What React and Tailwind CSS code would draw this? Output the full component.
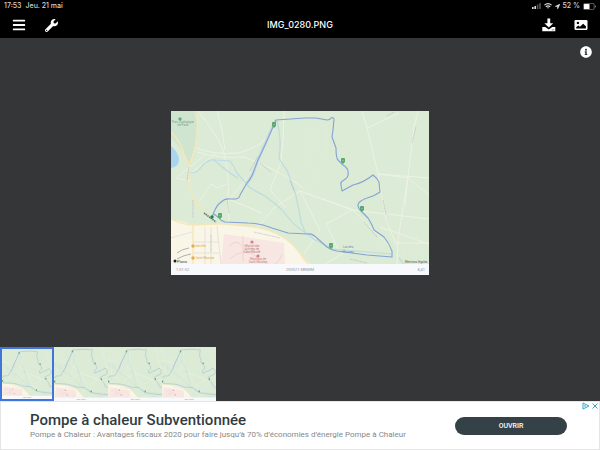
import React from "react";
import { FaBars, FaInfoCircle, FaWrench, FaLocationArrow } from "react-icons/fa";

const ROUTE =
  "M212 217 L214 212 Q217 205 220 203 Q225 198 230 199 L236 199 Q240 198 240 195 L247 183 Q252 177 253 173 L258 160 L265 145 L273 127 L276 120 L305 118 L316 118 L327 120 Q330 120 331 118 Q333 117 334 119 L333 130 L332 137 L336 148 Q336 158 338 160 L343 165 Q349 169 348 173 Q349 177 344 180 Q340 182 341 185 L342 191 L353 185 Q363 183 373 175 Q377 178 379 182 L380 192 Q374 196 370 197 Q357 201 358 206 Q359 210 362 212 L368 218 Q372 224 374 230 L384 237 Q389 243 392 251 L392 257 L367 255 L337 251 Q331 250 327 247 L318 239 Q312 233 308 234 L288 233 L272 228 Q260 223 248 223 L225 222 Q221 221 219 218 L214 214";

const PINS = [
  [274, 126],
  [343, 162],
  [362, 210],
  [331, 247],
  [220, 217],
];

const MapLabels = () => {
  return (
    <>
      <g fontSize="3" textAnchor="middle">
        <text x="183" y="123" fill="#79a388">Parc Zoologique</text>
        <text x="183" y="126" fill="#79a388">de Paris</text>
        <text x="252" y="247" fill="#c57e85">Hôpital des</text>
        <text x="252" y="250" fill="#c57e85">Armées de</text>
        <text x="252" y="253" fill="#c57e85">Saint-Mandé</text>
        <text x="258" y="260" fill="#c57e85">Hôpitaux de</text>
        <text x="258" y="263" fill="#c57e85">Saint-Maurice</text>
        <text x="200" y="247" fill="#d9a54f">Joinville</text>
        <text x="205" y="259" fill="#d9a54f">Saint-Maurice</text>
        <text x="348" y="248" fill="#6794a9">Lac des</text>
        <text x="348" y="253" fill="#6794a9">Minimes</text>
        <text x="416" y="263" fill="#59645b">Mentions légales</text>
      </g>
      <text x="177" y="263" fontSize="4" fill="#444">Plans</text>
      <g fontSize="4" fill="#96989d">
        <text x="176" y="271">1:01:52</text>
        <text x="425" y="271" textAnchor="end">8,41</text>
      </g>
    </>
  );
};

const TrackMap = ({ className, labels }) => {
  return (
    <svg
      viewBox="171 111 258 164"
      preserveAspectRatio="xMidYMid slice"
      className={className}
      fontFamily="Roboto, sans-serif"
      role="img"
      aria-label="Plans"
    >
      <path d="M171 111h258v164h-258z" fill="#dcebd5" />
      <path d="M171 111h26q0 22-3 38l-4 16q-6-15-19-27z" fill="#cfe5cf" />
      <path d="M171 146q7 6 8 13q0 8-8 9z" fill="#a9d3ee" />
      <path d="M171 220Q182 220 192 225L218 224L248 227Q270 229 281 236Q292 243 300 254L310 264H171z" fill="#f9f5e7" />
      <path d="M224 234L284 243L285 264H221z" fill="#f7e6e2" />
      <g fill="none" stroke="#f6e7b6" strokeWidth="1.4">
        <path d="M195 111Q199 123 197 141Q194 153 190 163Q187 175 190 190L194 200Q202 211 212 219" />
        <path d="M171 132Q181 142 184 154L188 165" />
        <path d="M171 219Q182 224 192 225L218 224Q255 222 281 236Q295 244 303 258L308 264" />
        <path d="M193 225V264" />
      </g>
      <g fill="none" stroke="#edf2e7" strokeWidth="1">
        <path d="M198 111Q218 136 223 150Q230 174 228 199L229 222" />
        <path d="M217 111Q223 130 225 150M197 148Q213 155 238 153Q262 148 274 129" />
        <path d="M197 152Q220 159 244 157Q278 169 305 189M205 155L176 178L190 181" />
        <path d="M190 174L216 153M199 202L211 184L218 188L226 184M230 199L247 178" />
        <path d="M284 111Q284 137 281 162L270 190L286 208" />
        <path d="M257 228L274 208L300 191L354 210M228 199L262 213" />
        <path d="M362 111L367 128L378 174L408 178L429 195M367 128L399 113M418 111L414 127L408 176L398 240L397 264" />
        <path d="M378 174L429 178M378 174L386 220L396 244M300 191L352 210L429 219" />
        <path d="M352 209Q375 231 392 249M300 191L320 230L304 254M352 210L326 224L338 249" />
        <path d="M380 227L429 244M396 243H429M325 264L352 248M408 178L405 205" />
      </g>
      <g fill="none" stroke="#e2ebd8" strokeWidth="1">
        <path d="M173 179L189 174M171 212L192 225M312 128V151M326 125V158M305 150L320 184M404 225V264M416 230V264" />
      </g>
      <g fill="none" stroke="#e6e2db" strokeWidth="1">
        <path d="M171 238L192 232M205 227V264M211 227V264M217 226L221 264M194 242H219M194 253H219" />
        <path d="M229 246Q237 238 243 247T257 248M230 259Q244 245 260 259T282 254M243 236V262" stroke="#efd4d1" />
      </g>
      <g fill="none" stroke="#bddbe3" strokeWidth="1.2">
        <path d="M190 173Q198 173 202 166Q208 159 216 160L230 161Q234 166 237 173Q244 181 249 187Q259 193 265 196Q275 203 283 211Q291 222 300 229Q309 235 315 240L333 249L391 254" />
        <path d="M214 160Q230 174 238 178" />
        <path d="M277 121Q282 140 279 158Q283 166 287 170L295 192Q299 209 301 222L306 234" />
        <path d="M399 258L404 264" />
      </g>
      <path d="M276 120L272 128L258 160L253 174L246 185" fill="none" stroke="#cddce3" strokeWidth="3" />
      <path d={ROUTE} fill="none" stroke="#84a2d4" strokeWidth="1.1" strokeLinejoin="round" />
      <g fill="none" stroke="#a9a8b8" strokeWidth="0.8" strokeDasharray="2 0.6">
        <path d="M250 171L258 156M260 163L271 172M290 181L294 191" opacity="0.6" />
        <path d="M416 127L412 143M364 222L377 237M383 200L386 215M387 116L394 112" opacity="0.6" />
        <path d="M254 232L280 238M350 259L367 263M227 198L229 213M211 235V252M193 200V218M189 167L187 181" opacity="0.6" />
        <path d="M177 253Q182 249 189 248M177 259Q184 255 191 254" strokeDasharray="none" stroke="#9aa0a8" />
      </g>
      <path d="M204 213L216 222" stroke="#67756b" strokeWidth="1.6" strokeDasharray="1.5 0.6" />
      {PINS.map(([x, y]) => (
        <g key={`${x}-${y}`}>
          <path
            d={`M${x - 2} ${y - 3}q0-1 1-1h2q1 0 1 1v3l-2 2-2-2z`}
            fill="#5aa96c"
          />
          <path d={`M${x} ${y - 2}v1`} stroke="#a2d0ab" strokeWidth="1" />
        </g>
      ))}
      <circle cx="212" cy="217" r="1.7" fill="#1f8050" />
      <circle cx="180" cy="119" r="1.7" fill="#67ad7b" />
      <g fill="#d57f86">
        <circle cx="252" cy="242" r="1.6" />
        <circle cx="258" cy="256" r="1.6" />
      </g>
      <g fill="#e8ac4d">
        <circle cx="193" cy="246" r="1.7" />
        <circle cx="193" cy="258" r="1.7" />
      </g>
      <circle cx="175" cy="261" r="1.5" fill="#222" />
      <path d="M171 264h258v11h-258z" fill="#f8f9fc" />
      <text x="300" y="271" fontSize="4" textAnchor="middle" fill="#96989d">200521-MNMM</text>
      {labels && <MapLabels />}
    </svg>
  );
};

const StatusBar = () => {
  return (
    <div className="flex h-3 items-center justify-between px-1 text-[7px] font-medium leading-3 text-neutral-300">
      <div className="flex gap-1">
        <span>17:53</span>
        <span>Jeu. 21 mai</span>
      </div>
      <div className="flex items-center gap-[3px]">
        <svg viewBox="0 0 9 6" className="h-[6px] w-[9px]" aria-hidden="true">
          <path d="M0 4h1.6v2H0zM2.4 3H4v3H2.4z" fill="#ddd" />
          <path d="M4.8 1.5h1.6V6H4.8zM7.2 0h1.6v6H7.2z" fill="#555" />
        </svg>
        <svg viewBox="0 0 8 6" className="h-[6px] w-2" fill="none" stroke="#ddd" aria-hidden="true">
          <path d="M.4 2.2Q4-1 7.6 2.2M1.8 3.8Q4 1.8 6.2 3.8" strokeWidth="1.1" />
          <path d="M3 4.6Q4 3.8 5 4.6L4 5.8z" fill="#ddd" stroke="none" />
        </svg>
        <FaLocationArrow className="h-[5px] w-[5px]" />
        <span>52 %</span>
        <svg viewBox="0 0 13 7" className="h-[7px] w-[13px]" aria-hidden="true">
          <rect x=".4" y=".4" width="10.8" height="6.2" rx="1.4" fill="none" stroke="#888" strokeWidth=".7" />
          <rect x="1" y="1" width="5.5" height="5" rx=".5" fill="#fff" />
          <path d="M12 2.5q1 .2 1 1t-1 1z" fill="#888" />
        </svg>
      </div>
    </div>
  );
};

const Toolbar = () => {
  return (
    <div className="grid h-[26px] grid-cols-3 items-center px-3 text-white">
      <div className="flex items-center gap-[19px]">
        <button aria-label="Menu">
          <FaBars className="h-[14px] w-[14px]" />
        </button>
        <button aria-label="Outils">
          <FaWrench className="h-[13px] w-[13px]" />
        </button>
      </div>
      <h1 className="text-center text-[9px] font-medium leading-3">IMG_0280.PNG</h1>
      <div className="flex items-center justify-end gap-[18px]">
        <button aria-label="Télécharger">
          <svg viewBox="0 0 14 14" className="h-[14px] w-[14px]" fill="currentColor">
            <path d="M5.4 .5h2.8v4.7h3L6.8 9.4 2.4 5.2h3z" />
            <path d="M.3 9h3L6.8 11.6 10.3 9h3v4.2H.3z" />
            <path d="M9.8 11.4h.8v.8h-.8zM11.4 11.4h.8v.8h-.8z" fill="#000" />
          </svg>
        </button>
        <button aria-label="Images">
          <svg viewBox="0 0 14 12" className="h-3 w-[14px]">
            <rect x=".5" y="1" width="13" height="10" rx="1.2" fill="#fff" />
            <path d="M2.2 9.5V8.2l2-1.8 1.7 1.3 3.2-3 2.8 2.6v2.2z" fill="#000" />
            <circle cx="3.9" cy="3.9" r="1.2" fill="#000" />
          </svg>
        </button>
      </div>
    </div>
  );
};

const AdBanner = () => {
  return (
    <aside className="relative flex h-[49px] items-center justify-between border border-neutral-200 bg-white pl-[29px] pr-8 font-[Roboto,sans-serif]">
      <div className="whitespace-nowrap">
        <h2 className="text-[15px] font-medium leading-[18px] text-[#303c42]">
          Pompe à chaleur Subventionnée
        </h2>
        <p className="text-[8px] leading-3 text-[#85898a]">
          Pompe à Chaleur : Avantages fiscaux 2020 pour faire jusqu’à 70% d’économies d’énergie Pompe à Chaleur
        </p>
      </div>
      <button className="h-[18px] w-28 rounded-full bg-[#344147] text-[7px] font-medium leading-[18px] text-white">
        OUVRIR
      </button>
      <div className="absolute right-0 top-0 flex gap-px text-[#35a9c6]">
        <button aria-label="Choisir sa pub">
          <svg viewBox="0 0 8 8" className="h-2 w-2" fill="none" stroke="currentColor">
            <path d="M1 1v6L7 4z" strokeWidth="1" />
            <path d="M3 3v2" strokeWidth="1" />
          </svg>
        </button>
        <button aria-label="Fermer">
          <svg viewBox="0 0 8 8" className="h-2 w-2" fill="none" stroke="currentColor">
            <path d="M1.5 1.5l5 5M6.5 1.5l-5 5" strokeWidth="1" />
          </svg>
        </button>
      </div>
    </aside>
  );
};

const App = () => {
  return (
    <div className="flex min-h-screen flex-col bg-[#353638] font-[Inter,sans-serif]">
      <header className="bg-black">
        <StatusBar />
        <Toolbar />
      </header>
      <main className="relative flex flex-1 items-center justify-center">
        <TrackMap className="w-[43%]" labels />
        <button aria-label="Informations" className="absolute right-2 top-2 text-white">
          <FaInfoCircle className="h-3 w-3" />
        </button>
      </main>
      <nav className="flex" aria-label="Miniatures">
        {[0, 1, 2, 3].map((i) => (
          <button key={i} aria-label={`Image ${i + 1}`}>
            <TrackMap
              className={i === 0 ? "h-[54px] w-[54px] border-2 border-[#3f75dc]" : "h-[54px] w-[54px]"}
            />
          </button>
        ))}
      </nav>
      <AdBanner />
    </div>
  );
};

export default App;
